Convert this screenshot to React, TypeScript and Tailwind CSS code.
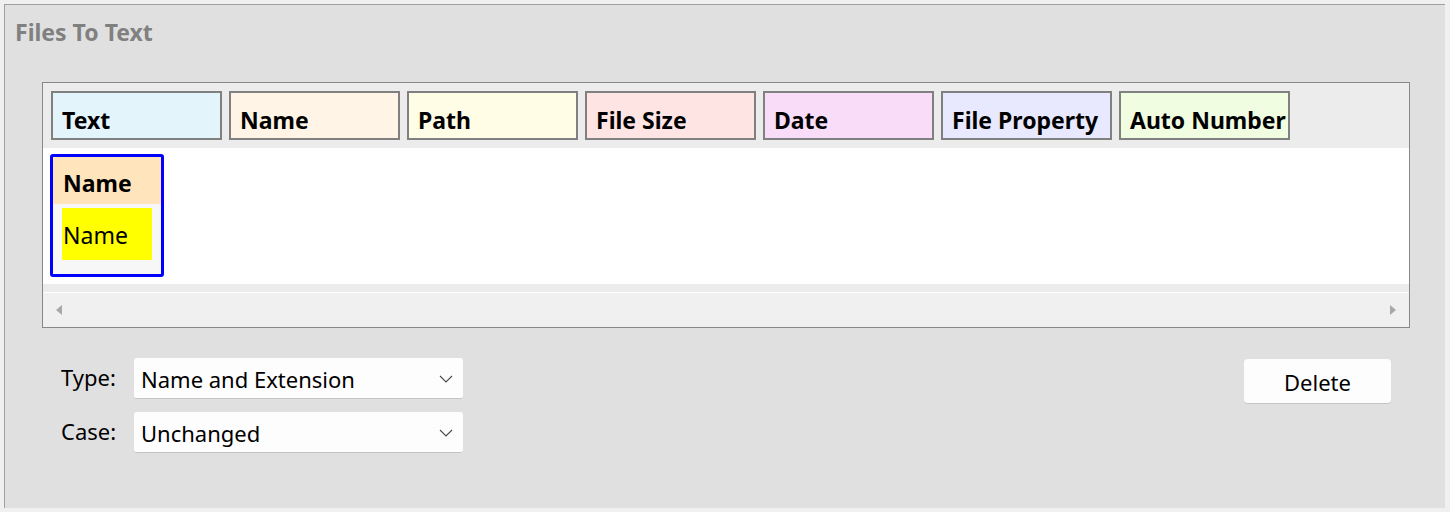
const tabs = [
  { label: "Text", bg: "bg-[#e3f4fb]" },
  { label: "Name", bg: "bg-[#fff4e6]" },
  { label: "Path", bg: "bg-[#fffde6]" },
  { label: "File Size", bg: "bg-[#ffe4e4]" },
  { label: "Date", bg: "bg-[#f8dcf8]" },
  { label: "File Property", bg: "bg-[#e8e8fe]" },
  { label: "Auto Number", bg: "bg-[#f0fde0]" },
];

function Combo({ value }: { value: string }) {
  return (
    <div className="flex h-[41px] w-[329px] items-center justify-between rounded-[3px] border-b border-[#c4c4c4] bg-[#fdfdfd] pl-[7px] pr-[10px]">
      <span className="pt-[3px] text-[22px] text-black">{value}</span>
      <svg width="14" height="8" viewBox="0 0 14 8" className="mt-[2px]">
        <polyline points="1,1 7,7 13,1" fill="none" stroke="#4a4a4a" strokeWidth="1.1" />
      </svg>
    </div>
  );
}

export default function App() {
  return (
    <div
      className="h-[512px] w-[1450px] overflow-hidden bg-[#f0f0f0] pl-[4px] pt-[4px]"
      style={{ fontFamily: '"Noto Sans", "Open Sans", sans-serif' }}
    >
      <div className="h-[504px] w-[1441px] border-l border-t border-[#a0a0a0] bg-[#e0e0e0]">
        {/* Title */}
        <div className="pl-[10px] pt-[12px] text-[23px] font-bold leading-[31px] text-[#808080]">
          Files To Text
        </div>

        {/* Field table */}
        <div className="ml-[37px] mt-[34px] flex w-[1368px] flex-col border border-[#888]">
          <div className="flex h-[65px] gap-[7px] bg-[#ececec] pl-[8px] pt-[8px]">
            {tabs.map((t) => (
              <div
                key={t.label}
                className={`flex h-[49px] w-[171px] items-center whitespace-nowrap border-2 border-[#808080] pl-[9px] pt-[9px] text-[23px] font-bold text-black ${t.bg}`}
              >
                {t.label}
              </div>
            ))}
          </div>

          <div className="h-[136px] bg-white pl-[7px] pt-[6px]">
            <div className="flex h-[123px] w-[114px] flex-col overflow-hidden rounded-[3px] border-[3px] border-[#0000ff]">
              <div className="flex h-[47px] items-center bg-[#ffe4bc] pl-[10px] pt-[5px] text-[23px] font-bold text-black">
                Name
              </div>
              <div className="flex-1 bg-[#f7f7f7] pl-[9px] pt-[4px]">
                <div className="flex h-[52px] w-[90px] items-center bg-[#ffff00] pl-[1px] pt-[3px] text-[23px] text-black">
                  Name
                </div>
              </div>
            </div>
          </div>

          <div className="h-[8px] bg-[#ececec]" />
          <div className="h-[1px] bg-white" />
          <div className="flex h-[34px] items-center justify-between bg-[#f0f0f0] px-[13px]">
            <span className="h-0 w-0 border-y-[5px] border-r-[6px] border-y-transparent border-r-[#a8a8a8]" />
            <span className="h-0 w-0 border-y-[5px] border-l-[6px] border-y-transparent border-l-[#a8a8a8]" />
          </div>
        </div>

        {/* Options */}
        <div className="mt-[30px] flex items-start justify-between pl-[56px] pr-[54px]">
          <div className="grid grid-cols-[73px_329px] items-center gap-y-[13px]">
            <span className="pb-[3px] text-[22px] text-black">Type:</span>
            <Combo value="Name and Extension" />
            <span className="pb-[3px] text-[22px] text-black">Case:</span>
            <Combo value="Unchanged" />
          </div>
          <button className="mt-[1px] h-[45px] w-[147px] rounded-[4px] border-b border-[#c4c4c4] bg-[#fdfdfd] pt-[3px] text-[22px] text-black">
            Delete
          </button>
        </div>
      </div>
    </div>
  );
}
